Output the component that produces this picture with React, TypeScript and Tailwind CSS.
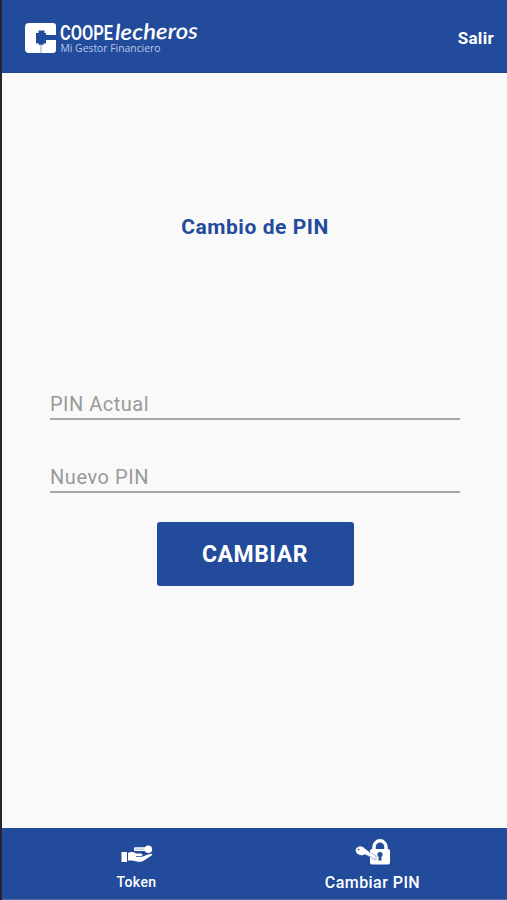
import React from 'react';

const Logo: React.FC = () => (
    <svg width="180" height="40" viewBox="0 0 180 40" fill="#fff" role="img" aria-label="COOPElecheros">
        {/* Mark */}
        <path d="M5 5H29Q32 5 32 8V17H22V15H20.5V12.5H14.5V15H12V25.5H15V27H19.5V25.5H22V22H32V32Q32 35 29 35H5Q1 35 1 31V9Q1 5 5 5Z" />
        <path d="M17 26V35" stroke="#8ea4cf" strokeWidth="1" />
        {/* Wordmark */}
        <text x="36" y="22" fontSize="21" fontWeight="600" textLength="53" lengthAdjust="spacingAndGlyphs" fontFamily="Roboto, sans-serif">COOPE</text>
        <text x="91" y="22" fontSize="22" fontStyle="italic" fontWeight="600" textLength="83" lengthAdjust="spacingAndGlyphs" fontFamily="Lato, sans-serif" transform="rotate(-1 91 22)">lecheros</text>
        <text x="36.5" y="33.5" fontSize="11" fill="#b9c9e8" fontWeight="500" textLength="100" lengthAdjust="spacingAndGlyphs" fontFamily="'Open Sans', sans-serif">Mi Gestor Financiero</text>
    </svg>
);

const TokenIcon: React.FC = () => (
    <svg width="32" height="20" viewBox="0 0 32 20" fill="#fff">
        <rect x="0.5" y="8" width="5.5" height="10" />
        <path d="M7 9C10 7.4 13 8 15 9.5H20Q21.5 9.8 21.5 11Q21.3 12 20 12H15V12.8H21L28.5 10Q31.5 9.3 31.2 11L23 16.5Q20.5 18.3 17 17.8L11 16.5H7Z" />
        <rect x="13" y="3.3" width="13" height="3.8" rx="1" />
        <path d="M14 5.2H24" stroke="#9caed4" strokeWidth="1" />
        <circle cx="27.3" cy="5.3" r="3.8" />
    </svg>
);

const PinIcon: React.FC = () => (
    <svg width="36" height="28" viewBox="0 0 36 28" fill="#fff">
        <path d="M19 13V9A6 6.2 0 0 1 31 9V13" fill="none" stroke="#fff" strokeWidth="3.4" />
        <rect x="15" y="11" width="20" height="15.5" rx="2" />
        <circle cx="25" cy="16.5" r="2.6" fill="#234b9b" />
        <path d="M24 17H26L26.6 22.5H23.4Z" fill="#234b9b" />
        <path d="M10 11.5L21 18V21.5L17.5 20.8L16.5 18.8L14.5 18.5L9 15.5Z" stroke="#8ea4cf" strokeWidth="0.8" />
        <ellipse cx="5.8" cy="12.8" rx="5.2" ry="4.3" transform="rotate(20 5.8 12.8)" />
        <path d="M6 12L11 11.5L14 14L11 17Z" />
        <circle cx="3.6" cy="11.6" r="0.9" fill="#234b9b" />
    </svg>
);

interface FieldProps {
    label: string;
    className: string;
}

const Field: React.FC<FieldProps> = ({ label, className }) => (
    <input
        type="text"
        placeholder={label}
        aria-label={label}
        className={`block h-[34px] w-full border-b-2 border-[#a6a6a6] bg-transparent pt-[3px] text-[20px] text-[#444] placeholder:text-[#999] outline-none ${className}`}
    />
);

export default function App() {
    return (
        <div className="flex h-[900px] w-[507px] flex-col overflow-hidden border-l-2 border-[#25252b] bg-[#f9f9f9] font-['Roboto',sans-serif]">
            <header className="flex h-[73px] shrink-0 items-start justify-between border-b border-[#1d4390] bg-[#234b9b] pl-[22px] pr-[13px] pt-[18px]">
                <Logo />
                <button className="mt-[8px] text-[17px] leading-6 font-bold tracking-[0.3px] text-white">Salir</button>
            </header>

            <main className="flex flex-1 flex-col items-center pl-12 pr-[47px]">
                <h1 className="mt-[140px] text-[21px] leading-7 font-bold tracking-[0.55px] text-[#234b9b]">Cambio de PIN</h1>
                <Field label="PIN Actual" className="mt-[145px] tracking-[0.5px]" />
                <Field label="Nuevo PIN" className="mt-[39px] tracking-[0.55px]" />
                <button className="mt-[29px] h-[64px] w-[197px] rounded-[3px] bg-[#234b9b] pt-[3px] text-[23px] font-bold tracking-[0.5px] text-white">
                    CAMBIAR
                </button>
            </main>

            <nav className="flex h-[72px] shrink-0 border-b border-[#4a6db2] bg-[#234b9b] text-white">
                <button className="flex w-[269px] flex-col items-center pt-[16px]">
                    <TokenIcon />
                    <span className="mt-[8px] text-[14px] leading-5 font-medium tracking-[0.4px]">Token</span>
                </button>
                <button className="flex w-[203px] flex-col items-center pt-[10px]">
                    <PinIcon />
                    <span className="mt-[5px] text-[16px] leading-6 font-medium tracking-[0.45px]">Cambiar PIN</span>
                </button>
            </nav>
        </div>
    );
}
